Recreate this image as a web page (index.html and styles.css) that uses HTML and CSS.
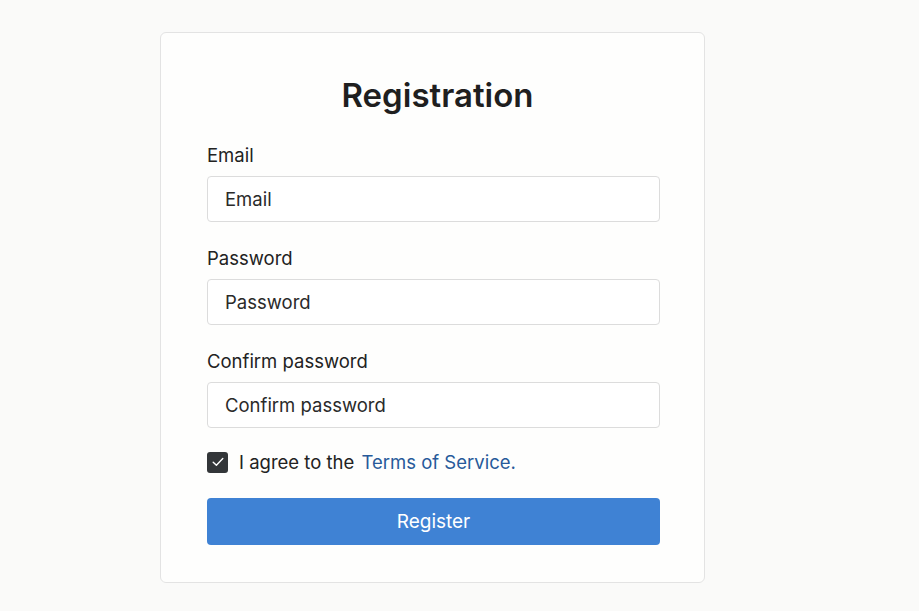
FILE: index.html
```html
<!DOCTYPE html>
<html lang="en">
<head>
    <meta charset="UTF-8">
    <meta name="viewport" content="width=device-width, initial-scale=1.0">
    <title>Registration</title>
    <link rel="stylesheet" href="styles.css">
</head>
<body>
    <form class="card">
        <h1>Registration</h1>

        <!-- Email -->
        <div class="field">
            <label for="email">Email</label>
            <input type="email" id="email" placeholder="Email">
        </div>

        <!-- Password -->
        <div class="field">
            <label for="password">Password</label>
            <input type="password" id="password" placeholder="Password">
        </div>

        <!-- Confirm -->
        <div class="field">
            <label for="confirm">Confirm password</label>
            <input type="password" id="confirm" placeholder="Confirm password">
        </div>

        <label class="agree">
            <span class="check">
                <svg width="14" height="14" viewBox="0 0 14 14"><path d="M2.2 7.2 L5.4 10.2 L11.8 3.6" fill="none" stroke="#fff" stroke-width="1.4" stroke-linecap="round" stroke-linejoin="round"/></svg>
            </span>
            <span>I agree to the <a href="#">Terms of Service.</a></span>
        </label>

        <button type="button">Register</button>
    </form>
</body>
</html>
```

FILE: styles.css
```css
body {
    font-family: 'Inter', 'Noto Sans', sans-serif;
    margin: 0;
    padding: 32px 0 0 160px;
    background-color: #fafaf9;
    color: #222;
}
.card {
    width: 545px;
    height: 551px;
    box-sizing: border-box;
    padding: 40px 45px 0 46px;
    background-color: #fefefd;
    border: 1px solid #e3e3e3;
    border-radius: 6px;
}
h1 {
    margin: 0 0 27px;
    padding-left: 9px;
    font-size: 33px;
    line-height: 44px;
    font-weight: 600;
    text-align: center;
    color: #1f1f1f;
}
.field {
    margin-bottom: 25px;
}
.field label {
    display: block;
    font-size: 18.5px;
    line-height: 22px;
    margin-bottom: 10px;
    color: #222;
}
.field input {
    display: block;
    width: 453px;
    height: 46px;
    box-sizing: border-box;
    padding: 0 17px;
    font-family: inherit;
    font-size: 18.5px;
    border: 1px solid #dcdcdc;
    border-radius: 4px;
    background-color: #fff;
}
.field input::placeholder {
    color: #2a2a2a;
}
.agree {
    display: flex;
    align-items: center;
    gap: 11px;
    margin-top: -2px;
    font-size: 18.5px;
    line-height: 22px;
    color: #222;
}
.agree a {
    color: #275a9a;
    text-decoration: none;
    margin-left: 2px;
}
.check {
    width: 21px;
    height: 21px;
    border-radius: 3px;
    background-color: #333639;
    display: flex;
    align-items: center;
    justify-content: center;
}
button {
    display: block;
    width: 453px;
    height: 47px;
    margin-top: 25px;
    border: none;
    border-radius: 4px;
    background-color: #3f82d4;
    color: #fff;
    font-family: inherit;
    font-size: 19px;
    cursor: pointer;
}
```
